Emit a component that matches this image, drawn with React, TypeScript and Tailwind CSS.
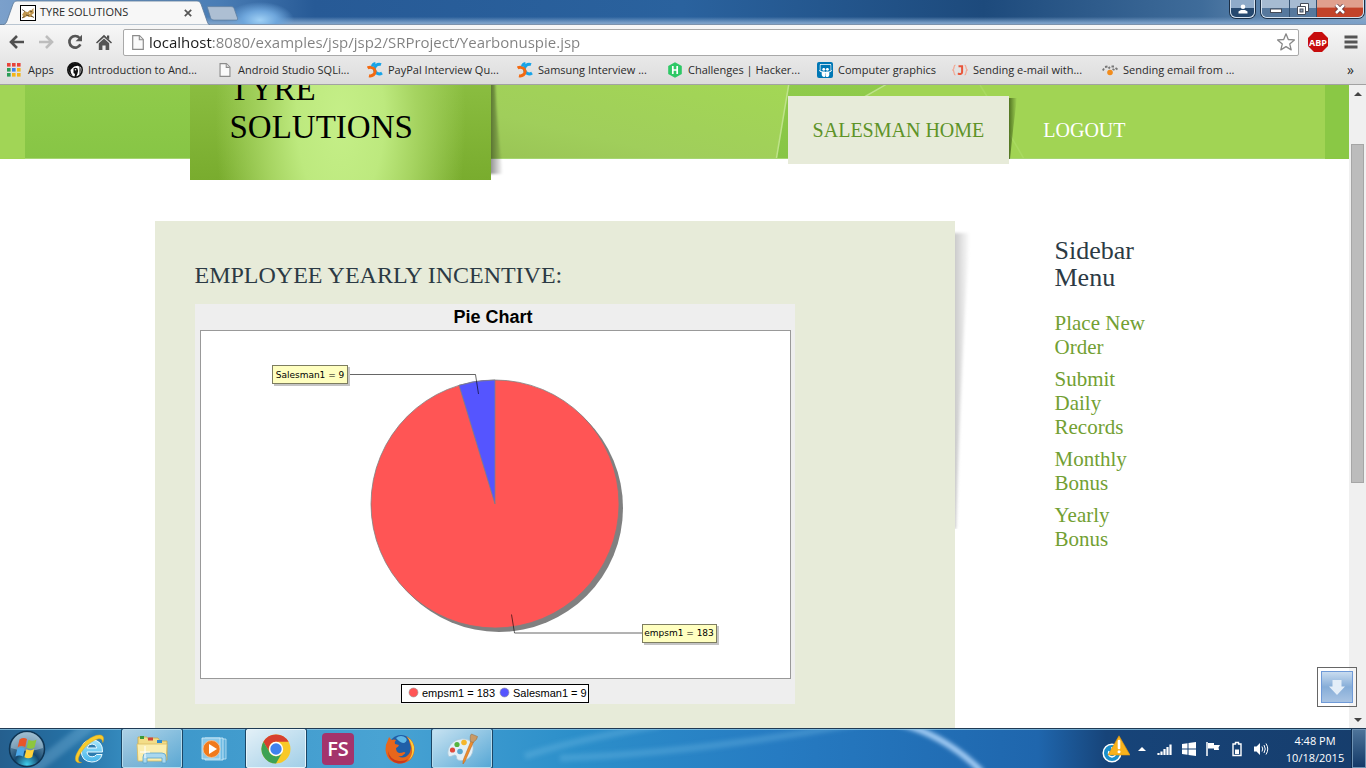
import type { ReactNode } from "react";
import { FaSlideshare } from "react-icons/fa";

/* ---------- Browser chrome icons ---------- */

function Favicon() {
  return (
    <svg viewBox="0 0 16 16" className="size-4 shrink-0" aria-hidden="true">
      <rect x=".5" y=".5" width="15" height="15" fill="#fff" stroke="#000" />
      <path d="M2 10l2.500-4 3 1.200L10 5l1 .5L13.500 3v3.500l.5 1.500-2.500 2 2 2H9l-2-1-3 2-2-.5 1.500-1.500z" fill="#c0964e" />
      <path d="M2 4.500l3 2M6 10l3 .8M10 6l2 .8M2 13l2.500-1.600M11 11l3 1.500" stroke="#4a3a22" strokeWidth=".8" />
      <path d="M9 7.500l2 .8-2 .8z" fill="#f7e6b5" />
    </svg>
  );
}

function PageIcon({ className }: { className: string }) {
  return (
    <svg viewBox="0 0 12 15" className={className} aria-hidden="true">
      <path d="M.7.7h6.8l3.8 3.8v9.8H.7z" fill="#fafafa" stroke="#8c8c8c" strokeWidth="1.2" />
      <path d="M7.3.9v3.8h3.8" fill="#e4e4e4" stroke="#8c8c8c" strokeWidth="1.1" />
    </svg>
  );
}

function BackIcon({ color }: { color: string }) {
  return (
    <svg viewBox="0 0 16 14" className="h-[14px] w-4" aria-hidden="true">
      <path d="M8 1 2 7l6 6M2.5 7H15" fill="none" stroke={color} strokeWidth="2.6" />
    </svg>
  );
}

function ReloadIcon() {
  return (
    <svg viewBox="0 0 16 16" className="size-4" aria-hidden="true">
      <path d="M12.6 4A5.8 5.8 0 1 0 13.4 10.4" fill="none" stroke="#555" strokeWidth="2.6" />
      <path d="M15 .8v6.4H8.6z" fill="#555" />
    </svg>
  );
}

function HomeIcon() {
  return (
    <svg viewBox="0 0 16 16" className="size-4" aria-hidden="true">
      <path d="M8 .8 16 8.4l-1 1.2L8 3.2 1 9.6 0 8.4z" fill="#4d4d4d" />
      <path d="M11 1.6h2.2v4L11 3.8z" fill="#4d4d4d" />
      <path d="M2.8 9.3 8 4.6l5.2 4.7V16H9.6v-4.6H6.4V16H2.8z" fill="#555" />
    </svg>
  );
}

function AppsIcon() {
  const colors = ["#e8433a", "#e8433a", "#e8433a", "#2a9d57", "#3f7fe8", "#f3b517", "#2a9d57", "#f3b517", "#f3b517"];
  return (
    <svg viewBox="0 0 14 14" className="size-[14px]" aria-hidden="true">
      {colors.map((c, i) => (
        <rect key={i} x={(i % 3) * 5} y={Math.floor(i / 3) * 5} width="3.6" height="3.6" fill={c} />
      ))}
    </svg>
  );
}

function BirdIcon() {
  return (
    <svg viewBox="0 0 16 16" className="size-4" aria-hidden="true">
      <circle cx="8" cy="8" r="7.2" fill="#fff" stroke="#111" strokeWidth="1.6" />
      <path d="M2 4q3-3 6-3 5 0 6.500 4L12 4.500q-1-1-2.500-.5-2.500 0-4 2L3.500 8 4 11l2 3-3-2-2-4z" fill="#111" />
      <path d="M6.500 6.500q2-1.500 4 0 1 2 0 5L9 15H7.500l.5-3-1.500-1z" fill="#111" />
      <path d="M12.500 4q2.500 4 0 9z" fill="#111" />
      <circle cx="8.500" cy="7.800" r=".8" fill="#fff" />
    </svg>
  );
}

function CareerIcon() {
  return (
    <svg viewBox="0 0 16 16" className="size-4" aria-hidden="true">
      <path d="M14 2.600A4.800 4.800 0 1 0 15 11" fill="none" stroke="#18a4e8" strokeWidth="3" />
      <path d="M.6 6A4.800 4.300 0 1 1 2 13.700" fill="none" stroke="#f36a12" strokeWidth="3" />
      <path d="M5.400 4.500Q6 2 8.500 1.600" fill="none" stroke="#18a4e8" strokeWidth="3" />
    </svg>
  );
}

function HackerIcon() {
  return (
    <svg viewBox="0 0 16 16" className="size-4" aria-hidden="true">
      <path d="M8 .2 14.800 4v8L8 15.800 1.200 12V4z" fill="#2ec866" />
      <path d="M5.800 4v8M10.200 4v8M5.800 8h4.400" stroke="#fff" strokeWidth="1.700" />
    </svg>
  );
}

function PeopleIcon() {
  return (
    <span className="flex size-4 items-center justify-center rounded-xs bg-[#0077b5]">
      <FaSlideshare className="size-[13px] text-white" />
    </span>
  );
}

function JavaIcon() {
  return (
    <svg viewBox="0 0 16 16" className="size-4" aria-hidden="true">
      <path d="M3.500 3C1 3 3 7 .8 8 3 9 1 13 3.500 13M12.500 3c2.500 0 .5 4 2.700 5-2.200 1-.2 5-2.700 5" fill="none" stroke="#f3a48f" strokeWidth="1.200" />
      <path d="M6.500 4.200h3.600v6c0 2-2.600 2.500-4.100 1" fill="none" stroke="#e8553a" strokeWidth="2" />
    </svg>
  );
}

function DotsIcon() {
  return (
    <svg viewBox="0 0 16 16" className="size-4" aria-hidden="true">
      <circle cx="8" cy="10.500" r="2.800" fill="#f28c1c" />
      <path d="M.8 8.500 2 6.500M3 5l2.500-.5M6.500 6.500 8 5M9.500 4.500h2.500M10.500 7l2 1M13.500 6l2 1.500" stroke="#777" strokeWidth="1.800" />
    </svg>
  );
}

function StarIcon() {
  return (
    <svg viewBox="0 0 20 20" className="size-5" aria-hidden="true">
      <path d="M10 1.800l2.300 5.700 6.100.4-4.700 4 1.500 6L10 14.600 4.800 17.900l1.500-6-4.700-4 6.100-.4z" fill="#fff" stroke="#888" strokeWidth="1.300" strokeLinejoin="round" />
    </svg>
  );
}

function AdblockIcon() {
  return (
    <span className="flex size-5 items-center justify-center bg-[#c70d0d] font-['Open_Sans',sans-serif] text-[9px] leading-none font-bold text-white [clip-path:polygon(30%_0,70%_0,100%_30%,100%_70%,70%_100%,30%_100%,0_70%,0_30%)]">
      ABP
    </span>
  );
}

const bookmarks: { label: string; icon: ReactNode; width: string }[] = [
  { label: "Apps", icon: <AppsIcon />, width: "w-[60px]" },
  { label: "Introduction to And...", icon: <BirdIcon />, width: "w-[150px]" },
  { label: "Android Studio SQLi...", icon: <span className="pl-[2px]"><PageIcon className="h-[14px] w-3" /></span>, width: "w-[150px]" },
  { label: "PayPal Interview Qu...", icon: <CareerIcon />, width: "w-[150px]" },
  { label: "Samsung Interview ...", icon: <CareerIcon />, width: "w-[150px]" },
  { label: "Challenges | Hacker...", icon: <HackerIcon />, width: "w-[150px]" },
  { label: "Computer graphics", icon: <PeopleIcon />, width: "w-[135px]" },
  { label: "Sending e-mail with...", icon: <JavaIcon />, width: "w-[150px]" },
  { label: "Sending email from ...", icon: <DotsIcon />, width: "w-[150px]" },
];

function WindowButtons() {
  return (
    <div className="flex h-[18px] gap-[6px] pr-[2px]">
      <button
        aria-label="User"
        className="flex w-[25px] items-center justify-center rounded-b-md border border-t-0 border-[#d5e2ef] bg-linear-to-b from-[#8fabc9] from-45% to-[#26496f] to-50% shadow-[0_0_0_1px_#1c2f45]"
      >
        <svg viewBox="0 0 10 10" className="size-[10px]" aria-hidden="true">
          <circle cx="5" cy="2.800" r="2.300" fill="#fff" />
          <path d="M.5 9.500V7.500L3 6h4l2.500 1.500v2z" fill="#fff" />
        </svg>
      </button>
      <div className="flex overflow-hidden rounded-b-md border border-t-0 border-[#d5e2ef] shadow-[0_0_0_1px_#1c2f45]">
        <button aria-label="Minimize" className="flex w-[28px] items-center justify-center border-r border-[#33506f] bg-linear-to-b from-[#a6bbd2] from-45% to-[#56789d] to-50%">
          <svg viewBox="0 0 12 10" className="h-[10px] w-3" aria-hidden="true">
            <rect x=".5" y="5" width="11" height="3.500" fill="#fff" stroke="#444b58" />
          </svg>
        </button>
        <button aria-label="Restore" className="flex w-[27px] items-center justify-center border-r border-[#33506f] bg-linear-to-b from-[#a6bbd2] from-45% to-[#56789d] to-50%">
          <svg viewBox="0 0 12 12" className="size-3" aria-hidden="true">
            <path d="M3.500.5h8v8h-8z" fill="#fff" stroke="#444b58" />
            <path d="M.5 3.500h8v8h-8z" fill="#fff" stroke="#444b58" />
            <rect x="3" y="6" width="3" height="3" fill="#8fa5be" stroke="#444b58" />
          </svg>
        </button>
        <button aria-label="Close" className="flex w-[46px] items-center justify-center bg-linear-to-b from-[#e0a08e] from-40% to-[#c2432a] to-50%">
          <svg viewBox="0 0 12 10" className="h-[10px] w-3" aria-hidden="true">
            <path d="M2 1l8 8M10 1 2 9" stroke="#5a3038" strokeWidth="4" />
            <path d="M2 1l8 8M10 1 2 9" stroke="#fff" strokeWidth="2.500" />
          </svg>
        </button>
      </div>
    </div>
  );
}

function BrowserChrome() {
  return (
    <header className="shrink-0 font-['Open_Sans',sans-serif] text-[#2a2a2a]">
      <div className="flex h-[25px] items-start justify-between border-b border-[#7d93ad] bg-[radial-gradient(ellipse_34px_18px_at_260px_20px,#9fd0f5_0,#6ea6dc_50%,transparent_100%),linear-gradient(to_bottom,transparent_70%,#7ba0c8_96%),linear-gradient(to_right,#7ba0cb_0,#4a7db5_16%,#275a96_23%,#2a629e_50%,#1d4a7c_72%,#3f6c9a_88%,#8aa9c8_100%)]">
        <div className="flex h-full items-start">
          <div className="relative h-full w-[210px]">
            <svg viewBox="0 0 210 25" className="absolute inset-0 h-[25px] w-full" aria-hidden="true">
              <path d="M0 25c4 0 6-1 7-4L13 4c1-2 2-3 4-3h180c2 0 3 1 4 3l6 17c1 3 2 4 3 4z" fill="#f7f7f7" stroke="#5c7898" strokeWidth=".8" />
            </svg>
            <div className="relative flex h-full items-center pt-px pr-[14px] pl-5 text-[11px]">
              <Favicon />
              <span className="ml-1 flex-1">TYRE SOLUTIONS</span>
              <button aria-label="Close tab" className="p-1">
                <svg viewBox="0 0 8 8" className="size-2" aria-hidden="true">
                  <path d="M.8.8l6.400 6.400M7.200.8.8 7.200" stroke="#555" strokeWidth="1.700" />
                </svg>
              </button>
            </div>
          </div>
          <button aria-label="New tab" className="-ml-[3px] h-5 w-[31px] pt-[6px]">
            <svg viewBox="0 0 31 15" className="h-[15px] w-[31px]" aria-hidden="true">
              <path d="M1 .6h23c2 0 3 1 3.500 3l3 8.500c.3 1.500 0 2-1.500 2H7c-2 0-3-1-3.500-2.500L.6 2C.3 1 .5.6 1 .6z" fill="#adbfd3" stroke="#5f7f9f" strokeWidth=".8" />
            </svg>
          </button>
        </div>
        <WindowButtons />
      </div>

      <div className="flex h-[60px] flex-col border-b border-[#a2a2a2] bg-linear-to-b from-[#f7f7f7] to-[#dcdcdc]">
        <div className="flex h-[33px] items-center pt-px pr-[8px] pl-[9px]">
          <button aria-label="Back" className="w-[29px]"><BackIcon color="#505050" /></button>
          <button aria-label="Forward" className="w-[29px]"><span className="block w-4 rotate-180"><BackIcon color="#bdbdbd" /></span></button>
          <button aria-label="Reload" className="w-[29px]"><ReloadIcon /></button>
          <button aria-label="Home" className="w-[27px]"><HomeIcon /></button>
          <div className="flex h-[27px] flex-1 items-center rounded-xs border border-[#a9a9a9] bg-white pr-[2px] pl-2">
            <PageIcon className="h-[15px] w-3" />
            <input
              aria-label="Address"
              defaultValue="localhost:8080/examples/jsp/jsp2/SRProject/Yearbonuspie.jsp"
              className="ml-[5px] min-w-0 flex-1 bg-[linear-gradient(to_right,#1c1c1c_64px,#808080_64px)] bg-clip-text text-[15px] leading-6 text-transparent outline-none"
            />
            <button aria-label="Bookmark this page"><StarIcon /></button>
          </div>
          <button aria-label="Adblock Plus" className="ml-[9px]"><AdblockIcon /></button>
          <button aria-label="Menu" className="ml-[16px]">
            <svg viewBox="0 0 14 14" className="size-[14px]" aria-hidden="true">
              <path d="M.5 2h13M.5 7h13M.5 12h13" stroke="#555" strokeWidth="3" />
            </svg>
          </button>
        </div>
        <nav aria-label="Bookmarks" className="flex h-[24px] items-center overflow-hidden pr-[12px] pl-[7px] text-[11px] leading-4">
          {bookmarks.map((b) => (
            <a key={b.label} href="#" className={`flex shrink-0 items-center ${b.width}`}>
              <span className="flex w-[21px] shrink-0 items-center">{b.icon}</span>
              <span className="whitespace-nowrap">{b.label}</span>
            </a>
          ))}
          <button aria-label="More bookmarks" className="ml-auto text-sm leading-4">»</button>
        </nav>
      </div>
    </header>
  );
}

/* ---------- Web page ---------- */

function SiteHeader() {
  return (
    <div className="relative h-[74px] bg-[#a1d454]">
      <div className="absolute inset-0 flex justify-center overflow-hidden bg-[linear-gradient(to_right,#a1d556_50%,#8ac845_50%)]">
        <svg viewBox="0 0 1300 74" className="h-[74px] w-[1300px] shrink-0" aria-hidden="true">
          <defs>
            <linearGradient id="leafDark" x1="0" y1="0" x2="0" y2="1">
              <stop offset="0" stopColor="#90cb4b" />
              <stop offset="1" stopColor="#87c545" />
            </linearGradient>
            <linearGradient id="leafLight" x1="0" y1="1" x2="1" y2="0">
              <stop offset="0" stopColor="#98c354" />
              <stop offset=".35" stopColor="#a0ce5b" />
              <stop offset="1" stopColor="#a3d755" />
            </linearGradient>
          </defs>
          <rect width="1300" height="74" fill="url(#leafDark)" />
          <path d="M440 0h324l-13 74H440z" fill="url(#leafLight)" />
          <path d="M764-2l-13 78" stroke="#bfe38a" strokeWidth="1.500" />
          <path d="M862 0 820 24 790 50v24h510V0z" fill="#a1d454" />
          <path d="M862-1 820 23" stroke="#bfe38a" strokeWidth="1.500" />
          <path d="M955 0q20 32 44 74" stroke="#a9da61" strokeWidth="1.500" fill="none" />
          <path d="M0 73.500h1300" stroke="#a6d573" />
        </svg>
      </div>

      <div className="relative mx-auto flex max-w-[970px] items-start justify-between">
        <a
          href="#"
          className="relative flex h-[95px] w-[301px] flex-col justify-end bg-[radial-gradient(ellipse_125px_260px_at_50%_35%,#c5ef88_0%,#bde97e_35%,#a6d461_60%,transparent_100%),linear-gradient(to_bottom,#8abd40,#79ac2e)]"
        >
          <span className="flex h-[95px] flex-col justify-end overflow-hidden pb-[34px] pl-10 text-[33px] leading-[38px] text-black">
            <span>TYRE</span>
            <span>SOLUTIONS</span>
          </span>
          <svg viewBox="0 0 14 92" className="absolute top-0 left-full h-[92px] w-[14px]" aria-hidden="true">
            <defs>
              <linearGradient id="logoShade" x1="0" x2="1">
                <stop offset="0" stopColor="#000" stopOpacity=".55" />
                <stop offset="1" stopColor="#000" stopOpacity="0" />
              </linearGradient>
              <filter id="logoSoft"><feGaussianBlur stdDeviation=".8" /></filter>
            </defs>
            <path d="M-4-4h8q2 50 8 93H-4z" fill="url(#logoShade)" filter="url(#logoSoft)" />
          </svg>
        </a>
        <nav aria-label="Main" className="mr-[9px] flex gap-[9px] pt-[11px] text-[20px] leading-[68px]">
          <a href="#" className="relative bg-[#e7ebd9] px-[25px] text-[#5e9328]">
            SALESMAN HOME
            <svg viewBox="0 0 8 62" className="absolute top-[2px] left-full h-[62px] w-2" aria-hidden="true">
              <defs>
                <linearGradient id="navShade" x1="0" x2="1">
                  <stop offset="0" stopColor="#1c3300" stopOpacity=".6" />
                  <stop offset="1" stopColor="#1c3300" stopOpacity="0" />
                </linearGradient>
              </defs>
              <path d="M0 0h8Q4 30 1 61H0z" fill="url(#navShade)" />
            </svg>
          </a>
          <a href="#" className="px-[25px] text-white">LOGOUT</a>
        </nav>
      </div>
    </div>
  );
}

const CX = 300;
const CY = 200;
const R = 124;

function PieChart() {
  const angle = (9 / 192) * Math.PI * 2;
  const x = CX - R * Math.sin(angle);
  const y = CY - R * Math.cos(angle);
  return (
    <svg
      viewBox="0 0 600 400"
      className="h-[400px] w-[600px] font-['Liberation_Sans',Arial,sans-serif]"
      role="img"
      aria-label="Pie chart of yearly incentive"
    >
      <rect width="600" height="400" fill="#eeeeee" />
      <text x="298" y="19" textAnchor="middle" className="text-[18px] font-bold">Pie Chart</text>
      <rect x="5.500" y="26.500" width="590" height="348" fill="#fff" stroke="#999" />
      <circle cx={CX + 4} cy={CY + 4} r={R} fill="#808080" />
      <circle cx={CX} cy={CY} r={R} fill="#ff5555" stroke="#808080" strokeWidth=".8" />
      <path d={`M${CX} ${CY}V${CY - R}A${R} ${R} 0 0 0 ${x} ${y}z`} fill="#5555ff" stroke="#808080" strokeWidth=".8" />
      <path d="M283.500 90 280.500 70.500H154M316.500 310.500l3 18.500H447" fill="none" stroke="#000" strokeOpacity=".6" />
      <rect x="79" y="63" width="76" height="19" fill="#c4c4c4" />
      <rect x="77.500" y="61.500" width="75" height="18" fill="#ffffc0" stroke="#7d7d60" />
      <text x="115" y="74" textAnchor="middle" className="font-['DejaVu_Sans',sans-serif] text-[9px]">Salesman1 = 9</text>
      <rect x="449" y="322" width="75" height="19" fill="#c4c4c4" />
      <rect x="447.500" y="320.500" width="74" height="18" fill="#ffffc0" stroke="#7d7d60" />
      <text x="484" y="332" textAnchor="middle" className="font-['DejaVu_Sans',sans-serif] text-[9px]">empsm1 = 183</text>
      <rect x="206.500" y="380.500" width="187" height="18" fill="#fff" stroke="#000" />
      <circle cx="218.500" cy="388.500" r="4.500" fill="#ff5555" stroke="#999" strokeWidth=".6" />
      <text x="227" y="393" className="text-[11px]">empsm1 = 183</text>
      <circle cx="309.500" cy="388.500" r="4.500" fill="#5555ff" stroke="#999" strokeWidth=".6" />
      <text x="318" y="393" className="text-[11px]">Salesman1 = 9</text>
    </svg>
  );
}

const sidebarLinks = ["Place New Order", "Submit Daily Records", "Monthly Bonus", "Yearly Bonus"];

function WebPage() {
  return (
    <div className="min-w-0 flex-1 overflow-hidden bg-white font-['Liberation_Serif',Georgia,serif]">
      <SiteHeader />
      <div className="mx-auto mt-[62px] flex h-full max-w-[1040px] items-start">
        <main className="relative h-full max-w-[800px] flex-1 bg-[#e7ebd9] px-10 pt-10">
          <h1 className="mb-[14px] text-[24px] leading-[29px] text-[#2c3a44]">EMPLOYEE YEARLY INCENTIVE:</h1>
          <PieChart />
          <svg viewBox="0 0 16 300" className="absolute top-[8px] left-full h-[300px] w-4" aria-hidden="true">
            <defs>
              <linearGradient id="cardShade" x1="0" x2="1">
                <stop offset="0" stopColor="#bdbdbd" />
                <stop offset="1" stopColor="#fff" />
              </linearGradient>
              <filter id="cardSoft"><feGaussianBlur stdDeviation="1.500" /></filter>
            </defs>
            <path d="M-4 4h19Q6 130 1 300H-4z" fill="url(#cardShade)" filter="url(#cardSoft)" />
          </svg>
        </main>
        <aside className="ml-[100px] w-[100px] pt-4">
          <h2 className="text-[26px] leading-[27px] text-[#2c3a44]">Sidebar Menu</h2>
          <ul className="mt-5 flex flex-col gap-2 text-[21px] leading-6 text-[#72a032]">
            {sidebarLinks.map((label) => (
              <li key={label}><a href="#">{label}</a></li>
            ))}
          </ul>
        </aside>
      </div>
    </div>
  );
}

function ScrollBar() {
  return (
    <div className="flex w-[17px] shrink-0 flex-col items-center bg-[#f0f0f0]">
      <button aria-label="Scroll up" className="flex h-[17px] items-center">
        <svg viewBox="0 0 8 4" className="h-1 w-2" aria-hidden="true"><path d="M4 0l4 4H0z" fill="#444" /></svg>
      </button>
      <div className="grow-[42]" />
      <div className="w-[13px] grow-[338] border border-[#a6a6a6] bg-[#bcbcbc]" />
      <div className="grow-[229]" />
      <button aria-label="Scroll down" className="flex h-[17px] items-center">
        <svg viewBox="0 0 8 4" className="h-1 w-2" aria-hidden="true"><path d="M0 0h8L4 4z" fill="#444" /></svg>
      </button>
    </div>
  );
}

/* ---------- Taskbar ---------- */

function StartOrb() {
  return (
    <svg viewBox="0 0 38 38" className="size-[38px]" aria-hidden="true">
      <defs>
        <radialGradient id="orb" cx=".5" cy=".95" r=".9">
          <stop offset="0" stopColor="#3fd0ee" />
          <stop offset=".4" stopColor="#16486f" />
          <stop offset="1" stopColor="#7fa6c0" />
        </radialGradient>
      </defs>
      <circle cx="19" cy="19" r="17.500" fill="url(#orb)" stroke="#0f3554" strokeWidth="1.500" />
      <path d="M3 18a16 16 0 0 1 32 0q-16 6-32 0z" fill="#c2d8e4" opacity=".45" />
      <path d="M11.500 9.500q4-2.500 7.500-.5l-1.800 8q-4-2-7.500.2z" fill="#e8562a" />
      <path d="M20.500 9.800q4 2.200 8-.3l-2 8q-3.500 2.500-7.800.3z" fill="#8dc63f" />
      <path d="M9.300 18.800q4-2.400 7.500-.3l-1.800 8q-3.800-2.200-7.500 0z" fill="#4ca8e8" />
      <path d="M18.400 19.300q4 2.200 7.800-.2l-2 8q-3.800 2.400-7.800.2z" fill="#ffd23a" />
    </svg>
  );
}

function ExplorerEIcon() {
  return (
    <svg viewBox="0 0 32 32" className="size-8" aria-hidden="true">
      <defs>
        <linearGradient id="ieBlue" x1="0" y1="0" x2="0" y2="1">
          <stop offset="0" stopColor="#a5e6fb" />
          <stop offset="1" stopColor="#45b4ea" />
        </linearGradient>
      </defs>
      <path d="M28.500 19H13q.5 4.800 5.200 4.800 3 0 4.300-2.300h5.600Q26 29 17.800 29 7.500 28.500 7.200 18 7.500 7.200 18 6.800 29 7.500 28.500 19zM13.200 15h9.600q-.4-4-4.700-4t-4.900 4z" fill="url(#ieBlue)" stroke="#eafaff" strokeWidth="1" />
      <path d="M7.500 29.500C2 31-.5 27 3 20 8 10 18 2 25.500 2c4 0 5 3 3.300 7.500-.2-4-3.300-5-8.300-2.200C13 11 7 18 4.800 24c-1.200 4 .2 5.400 2.700 5.500z" fill="#f7cb2c" stroke="#dca31a" strokeWidth=".5" />
    </svg>
  );
}

function FolderIcon() {
  return (
    <svg viewBox="0 0 34 30" className="h-[30px] w-[34px]" aria-hidden="true">
      <path d="M3 3h9l2 3v-2h9l2 3h7v19H3z" fill="#f3dd88" stroke="#c9a84a" strokeWidth=".8" />
      <path d="M5 2h4v3H5z" fill="#3b9a3b" /><path d="M13 3.500h5v3h-5z" fill="#d0453a" /><path d="M22 6h5v3h-5z" fill="#2d8ad0" />
      <path d="M2 10h30l-1 17H3z" fill="#fbeeb0" stroke="#d9bb62" strokeWidth=".8" />
      <path d="M8 29v-6q0-4 4-4h15q4 0 4 4v6h-4v-5H12v5z" fill="#a9d8ef" stroke="#5ca3c9" strokeWidth=".8" />
      <path d="M10 12v12M5 18h10" stroke="#fff" strokeWidth="1" />
    </svg>
  );
}

function MediaIcon() {
  return (
    <svg viewBox="0 0 28 28" className="size-7" aria-hidden="true">
      <path d="M9 4h17v20H9z" fill="#5fb0dc" stroke="#c3e4f4" strokeWidth=".8" />
      <path d="M5 3h18v22H5z" fill="#6fbbe3" stroke="#d6effa" strokeWidth=".8" />
      <path d="M2 3h18v21H2z" fill="#8ac9ea" stroke="#d6effa" strokeWidth=".8" />
      <circle cx="11.500" cy="14" r="8.500" fill="#f07a1c" stroke="#f8c79a" strokeWidth=".8" />
      <path d="M9 9l8 5-8 5z" fill="#fff" />
    </svg>
  );
}

function ChromeIcon() {
  return (
    <svg viewBox="0 0 30 30" className="size-[30px]" aria-hidden="true">
      <circle cx="15" cy="15" r="14.500" fill="#f8c927" />
      <path d="M2.440 7.750A14.500 14.500 0 0 1 27.560 7.750H15a7.250 7.250 0 0 0-6.280 10.880z" fill="#d7402f" />
      <path d="M2.440 7.750A14.500 14.500 0 0 0 15 29.500l6.280-10.880a7.250 7.250 0 0 1-12.560 0z" fill="#3da254" />
      <circle cx="15" cy="15" r="7.200" fill="#fff" />
      <circle cx="15" cy="15" r="5.700" fill="#3f82ee" />
    </svg>
  );
}

function FirefoxIcon() {
  return (
    <svg viewBox="0 0 32 32" className="size-8" aria-hidden="true">
      <circle cx="17" cy="14.500" r="12.500" fill="#1f5fa8" />
      <path d="M12 5q5-4 10 0 2 3-2 5-4 0-8-5z" fill="#5db6e6" />
      <path d="M22 3q9 5 8.500 14Q29 30 16 30.500 3 30 1.500 17 1.500 11 4 7l1-3 2.500 3Q10 6 12 7q-2 2-1 4l4 1q-.5 2-3 3 0 4 3 5 3 0 5-1 2 0 1 1.500Q18 24 14 23q6 4 11-2 3-5 1-10-1-5-4-8z" fill="#e8661b" />
      <path d="M23 3.500q8 6 7 14-1 7-6 10 5-5 4-12-1-7-5-12z" fill="#fbcf3a" />
      <path d="M4 18q2 9 11 10 6 .5 9-2-3 5-10 4.500Q4 28 4 18z" fill="#c9381c" />
    </svg>
  );
}

function PaintIcon() {
  return (
    <svg viewBox="0 0 32 32" className="size-8" aria-hidden="true">
      <path d="M15 6c8-1 13 4 12 11-1 8-8 12-15 10-2-1-1-3-2-4.500-2-1.500-4 1.500-7 1-3-4 0-16 12-17.500z" fill="#e2eff7" stroke="#a8c6d8" strokeWidth=".8" />
      <circle cx="14" cy="18.500" r="2.800" fill="#5aa7cf" />
      <circle cx="6.500" cy="17" r="2.600" fill="#e2493b" /><circle cx="11" cy="11.500" r="2.600" fill="#57b33e" /><circle cx="18" cy="9.500" r="2.800" fill="#f5b62c" />
      <path d="M17 31q-.5-3 1-6l7-17 2.500 1L20 26q-1 3-3 5z" fill="#ee8d2c" stroke="#b9631a" strokeWidth=".5" />
      <path d="M24.500 8.500q-1-6 1-7.500l6 2.500q0 3-4.500 6z" fill="#c99a66" stroke="#8f6a43" strokeWidth=".5" />
    </svg>
  );
}

function FsIcon() {
  return (
    <span className="flex size-8 items-center justify-center rounded-sm bg-[#a4346c] text-[20px] leading-none font-semibold text-white">FS</span>
  );
}

const tasks: { name: string; icon: ReactNode; look: string }[] = [
  { name: "Internet Explorer", icon: <ExplorerEIcon />, look: "border-transparent" },
  { name: "File Explorer", icon: <FolderIcon />, look: "border-[#b5dcee] bg-linear-to-br from-white/60 to-white/15 shadow-[0_0_0_1px_#1b4666]" },
  { name: "Media Player", icon: <MediaIcon />, look: "border-transparent" },
  { name: "Chrome", icon: <ChromeIcon />, look: "border-[#e6f5fb] bg-linear-to-br from-white/85 to-white/50 shadow-[0_0_0_1px_#1b4666]" },
  { name: "FS", icon: <FsIcon />, look: "border-transparent" },
  { name: "Firefox", icon: <FirefoxIcon />, look: "border-transparent" },
  { name: "Paint", icon: <PaintIcon />, look: "border-[#b5dcee] bg-linear-to-br from-white/70 to-white/15 shadow-[0_0_0_1px_#1b4666]" },
];

function Tray() {
  return (
    <div className="flex h-full items-center text-white">
      <div className="flex items-center gap-[8px] pr-[14px]">
        <svg viewBox="0 0 28 28" className="size-7" aria-hidden="true">
          <circle cx="10" cy="18" r="8.800" fill="#1a8fcb" stroke="#fff" strokeWidth="1.500" />
          <path d="M10 12v6M7 16q-2 5 3 6 5-1 3-6" stroke="#fff" strokeWidth="1.500" fill="none" />
          <path d="M17 .8 28 20H6z" fill="#f8b21c" stroke="#e0940c" strokeWidth=".6" />
          <path d="M17 6v7" stroke="#fff" strokeWidth="2.600" strokeLinecap="round" /><circle cx="17" cy="16.800" r="1.500" fill="#fff" />
        </svg>
        <svg viewBox="0 0 8 16" className="h-4 w-2" aria-hidden="true"><path d="M4 6l4 4H0z" fill="#fff" /></svg>
        <svg viewBox="0 0 16 16" className="ml-[3px] size-4" aria-hidden="true">
          <path d="M1.500 12v2M4.500 10.500V14M7.500 8v6M10.500 6v8M13.500 3.500V14" stroke="#fff" strokeWidth="2.200" />
        </svg>
        <svg viewBox="0 0 16 16" className="size-4" aria-hidden="true">
          <path d="M1 3l5.500-.8v5.300H1zM7.500 2 15 1v6.500H7.500zM1 8.500h5.500v5.300L1 13zM7.500 8.500H15V15l-7.500-1z" fill="#fff" />
        </svg>
        <svg viewBox="0 0 16 16" className="size-4" aria-hidden="true">
          <path d="M2 1v14" stroke="#fff" strokeWidth="1.500" />
          <path d="M3 2h6v2h6l-1.500 2.500L14 9H9V7.500H3z" fill="#fff" />
        </svg>
        <svg viewBox="0 0 16 16" className="size-4" aria-hidden="true">
          <path d="M6.500 1.500h3v1.500h2.500v11.500H4V3h2.500z" fill="none" stroke="#fff" strokeWidth="1.400" />
          <rect x="6" y="8.500" width="4" height="4.500" fill="#fff" />
        </svg>
        <svg viewBox="0 0 16 16" className="size-4" aria-hidden="true">
          <path d="M1 5.500h2.500L7 2v12l-3.500-3.500H1z" fill="#fff" />
          <path d="M9 5.500q1.500 2.500 0 5M11 4q2.500 4 0 8M13 2.500q3.500 5.500 0 11" stroke="#fff" strokeWidth="1" fill="none" />
        </svg>
      </div>
      <time className="w-[64px] text-center text-[11px] leading-[17px] whitespace-nowrap">
        4:48 PM
        <br />
        10/18/2015
      </time>
      <button aria-label="Show desktop" className="ml-[5px] h-full w-[14px] border border-[#6f93b4] bg-linear-to-b from-[#4d7399] to-[#133a68] shadow-[0_0_0_1px_#0f2c50]" />
    </div>
  );
}

function Taskbar() {
  return (
    <footer className="relative flex h-10 shrink-0 items-stretch justify-between overflow-hidden border-t border-[#203a54] bg-[linear-gradient(to_right,#255f8e_0,#2570a4_5%,#3d97ca_11%,#49a3d3_28%,#2c8fca_42%,#267bc2_57%,#1f66ad_76%,#174479_81%,#163d6c_100%)] font-['Open_Sans',sans-serif]">
      <svg viewBox="0 0 1366 40" preserveAspectRatio="none" className="absolute inset-0 h-full w-full" aria-hidden="true">
        <defs>
          <filter id="glow" filterUnits="userSpaceOnUse" x="0" y="-20" width="1366" height="80"><feGaussianBlur stdDeviation="2" /></filter>
        </defs>
        <path d="M898-6Q945 6 982 44" stroke="#a4cdf5" strokeWidth="6" fill="none" filter="url(#glow)" />
        <path d="M525 28Q570 12 660-4M560 30Q700 24 860-6" stroke="#7cc0e8" strokeOpacity=".3" strokeWidth="7" fill="none" filter="url(#glow)" />
        <path d="M30 44 90-4" stroke="#8cc4e4" strokeOpacity=".3" strokeWidth="12" fill="none" filter="url(#glow)" />
        <path d="M0 .5h1366" stroke="#8cc4e4" strokeOpacity=".8" />
      </svg>
      <div className="relative flex items-stretch gap-[2px] pl-2">
        <button aria-label="Start" className="mr-[12px]"><StartOrb /></button>
        {tasks.map((t) => (
          <button key={t.name} aria-label={t.name} className={`flex w-[60px] items-center justify-center rounded-xs border ${t.look}`}>
            {t.icon}
          </button>
        ))}
      </div>
      <div className="relative"><Tray /></div>
    </footer>
  );
}

export default function App() {
  return (
    <div className="flex h-screen flex-col overflow-hidden">
      <BrowserChrome />
      <div className="relative flex min-h-0 flex-1">
        <WebPage />
        <ScrollBar />
        <button aria-label="Download" className="absolute right-[9px] bottom-[21px] size-10 border border-[#666] bg-white/30 p-[3px]">
          <span className="flex size-full items-center justify-center border border-[#6f9ad8] bg-linear-to-b from-[#c9dcef] via-[#86add8] to-[#a9c4e3]">
            <svg viewBox="0 0 16 15" className="h-[15px] w-4" aria-hidden="true">
              <path d="M3.500 0h9v6.500H16L8 15 0 6.500h3.500z" fill="#e4eef8" />
            </svg>
          </span>
        </button>
      </div>
      <Taskbar />
    </div>
  );
}
